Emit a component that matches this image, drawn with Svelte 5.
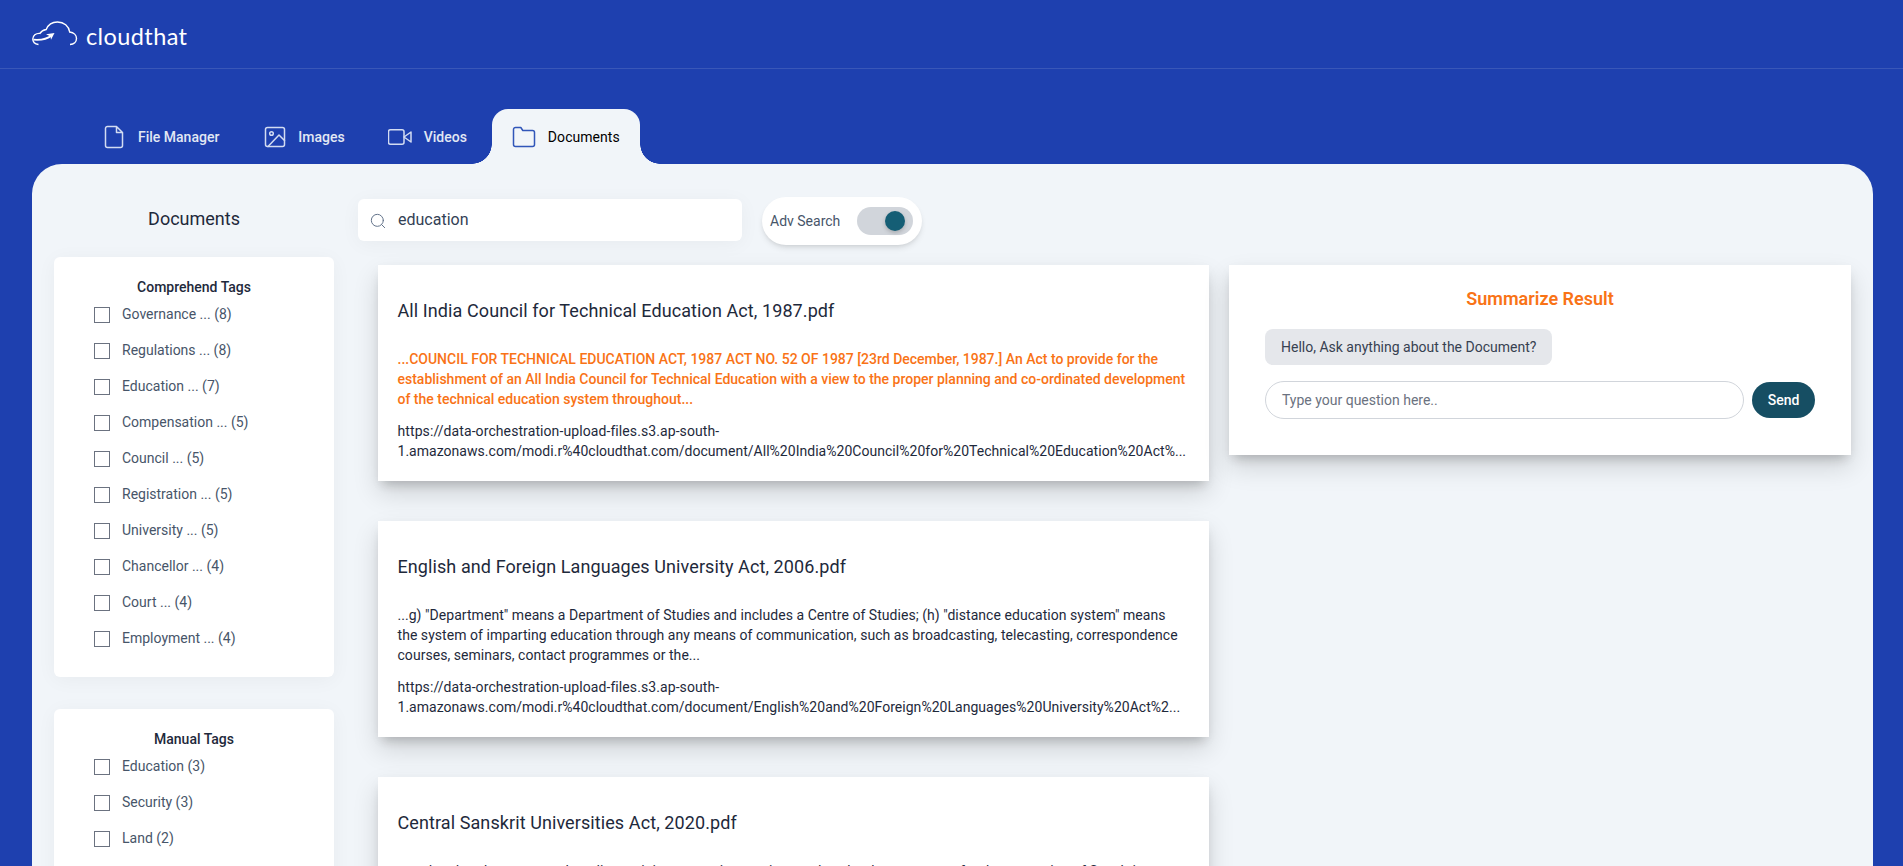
<script>
  const tabs = [
    { name: 'File Manager', icon: 'file' },
    { name: 'Images', icon: 'image' },
    { name: 'Videos', icon: 'video' },
    { name: 'Documents', icon: 'folder', active: true }
  ];
  const groups = [
    { title: 'Comprehend Tags', tags: ['Governance ... (8)', 'Regulations ... (8)', 'Education ... (7)', 'Compensation ... (5)', 'Council ... (5)', 'Registration ... (5)', 'University ... (5)', 'Chancellor ... (4)', 'Court ... (4)', 'Employment ... (4)'] },
    { title: 'Manual Tags', tags: ['Education (3)', 'Security (3)', 'Land (2)'] }
  ];
  const base = '1.amazonaws.com/modi.r%40cloudthat.com/document/';
  const results = [
    {
      title: 'All India Council for Technical Education Act, 1987.pdf', hot: true,
      lines: ['...COUNCIL FOR TECHNICAL EDUCATION ACT, 1987 ACT NO. 52 OF 1987 [23rd December, 1987.] An Act to provide for the', 'establishment of an All India Council for Technical Education with a view to the proper planning and co-ordinated development', 'of the technical education system throughout...'],
      url: 'All%20India%20Council%20for%20Technical%20Education%20Act%...'
    },
    {
      title: 'English and Foreign Languages University Act, 2006.pdf',
      lines: ['...g) "Department" means a Department of Studies and includes a Centre of Studies; (h) "distance education system" means', 'the system of imparting education through any means of communication, such as broadcasting, telecasting, correspondence', 'courses, seminars, contact programmes or the...'],
      url: 'English%20and%20Foreign%20Languages%20University%20Act%2...'
    },
    {
      title: 'Central Sanskrit Universities Act, 2020.pdf',
      lines: ['...and undertake extramural studies, training, extension services and such other measures for the promotion of Sanskrit']
    }
  ];
</script>

<div class="page">
  <header>
    <svg class="cloud" width="47" height="26" viewBox="0 0 47 26" fill="none" stroke="#fff" stroke-width="1.4">
      <path d="M6.500 23.500C2.500 23 .8 20.800.8 18c0-3.400 3-6 7.200-5.600 1.200-2.200 3.500-3.500 6.200-3.900C16 4 20.500 1 25.500 1c6.500 0 11.300 4.200 12.200 10 4.200.5 6.800 3.300 6.800 6.600 0 3.200-2.500 5.700-6.500 5.900" />
      <path d="M1.500 18.700c7.500.6 13.500-.5 18-4.200" stroke-width="1.800" />
      <path d="M14 13.200 22.500 12l-3.500 6.800-.5-3.300z" fill="#fff" stroke="none" />
    </svg>
    <span class="wordmark">cloudthat</span>
  </header>

  <nav>
    {#each tabs as tab}
      <div class="tab {tab.icon}" class:active={tab.active}>
        <svg width="24" height="24" viewBox="0 0 24 24" fill="none" stroke="currentColor" stroke-width="1.5" stroke-linecap="round" stroke-linejoin="round">
          {#if tab.icon === 'file'}
            <path d="M14.500 1.500H5.500a2 2 0 0 0-2 2v17a2 2 0 0 0 2 2h13a2 2 0 0 0 2-2V7.500zM14.500 1.500v6h6" />
          {:else if tab.icon === 'image'}
            <rect x="2.500" y="2.500" width="19" height="19" rx="2" /><circle cx="8.500" cy="8.500" r="1.800" /><path d="M21.500 15.500l-5.500-5.500L5 21.500" />
          {:else if tab.icon === 'video'}
            <path d="M23 7l-7 5 7 5V7z" /><rect x="0.500" y="4.700" width="15.500" height="14.600" rx="2" />
          {:else}
            <path d="M22.500 19.500a2 2 0 0 1-2 2h-17a2 2 0 0 1-2-2v-15a2 2 0 0 1 2-2h5.300l2 3h9.700a2 2 0 0 1 2 2z" />
          {/if}
        </svg>
        <span>{tab.name}</span>
        {#if tab.active}<i class="curve left"></i><i class="curve right"></i>{/if}
      </div>
    {/each}
  </nav>

  <main>
    <aside>
      <h2>Documents</h2>
      {#each groups as group}
        <section class="tags">
          <h3>{group.title}</h3>
          {#each group.tags as tag}
            <label><span class="box"></span>{tag}</label>
          {/each}
        </section>
      {/each}
    </aside>

    <div class="body">
      <div class="tools">
        <div class="search">
          <svg width="16" height="16" viewBox="0 0 24 24" fill="none" stroke="#64748b" stroke-width="1.500" stroke-linecap="round"><circle cx="11" cy="11" r="9" /><path d="M22 22l-4.600-4.600" /></svg>
          <span>education</span>
        </div>
        <div class="adv"><span>Adv Search</span><div class="toggle"><div class="knob"></div></div></div>
      </div>
      <div class="columns">
        <div class="results">
          {#each results as r}
            <article class="panel">
              <h4>{r.title}</h4>
              <div class="excerpt" class:hot={r.hot}>
                {#each r.lines as line}<div>{line}</div>{/each}
              </div>
              {#if r.url}
                <div class="url"><div>https://data-orchestration-upload-files.s3.ap-south-</div><div>{base}{r.url}</div></div>
              {/if}
            </article>
          {/each}
        </div>
        <section class="panel chat">
          <h3>Summarize Result</h3>
          <div class="bubble">Hello, Ask anything about the Document?</div>
          <div class="ask"><div class="input">Type your question here..</div><button>Send</button></div>
        </section>
      </div>
    </div>
  </main>
</div>

<style>
  :global(body) { margin: 0; overflow: hidden; }
  * { box-sizing: border-box; }
  h2, h3, h4 { margin: 0; }
  .page { height: 866px; overflow: hidden; background: #1e40af; font: 14px/20px Roboto, sans-serif; color: #1e293b; display: flex; flex-direction: column; padding: 0 30px 0 32px; }
  header { height: 69px; flex: none; display: flex; border-bottom: 1px solid rgba(255,255,255,.12); margin: 0 -30px 0 -32px; padding: 21px 0 0 32px; }
  .wordmark { font: 400 23.5px/30px Lato, sans-serif; color: #fff; margin-left: 7px; letter-spacing: .4px; }
  nav { display: flex; height: 95px; flex: none; padding: 40px 0 0 50px; }
  .tab { position: relative; display: flex; align-items: center; height: 55px; padding: 0 20px; color: #e2e8f4; font-weight: 500; }
  .tab svg { margin-right: 12px; flex: none; color: #d3dcf2; }
  .tab.file { margin-right: 4px; }
  .tab.image { margin-right: 3px; }
  .tab.image svg { margin-right: 11px; }
  .tab.video { margin-right: 5px; }
  .tab.active { background: #f1f5f9; border-radius: 16px 16px 0 0; color: #000; font-weight: 400; letter-spacing: .05px; }
  .tab.active svg { color: #3156b9; }
  .curve { position: absolute; bottom: 0; width: 20px; height: 20px; }
  .left { right: 100%; background: radial-gradient(circle at 0 0, transparent 19.500px, #f1f5f9 20px); }
  .right { left: 100%; background: radial-gradient(circle at 100% 0, transparent 19.500px, #f1f5f9 20px); }
  main { flex: none; height: 1100px; background: #f1f5f9; border-radius: 30px 30px 0 0; padding: 0 22px; display: flex; gap: 24px; }
  aside { width: 280px; flex: none; }
  h2 { font: 400 18px/28px Roboto, sans-serif; text-align: center; padding-top: 41px; height: 93px; }
  .tags { background: #fff; border-radius: 6px; height: 420px; margin-bottom: 32px; padding: 20px 40px; box-shadow: 0 3px 20px #0000000b; }
  .tags h3 { font: 500 14px/20px Roboto, sans-serif; text-align: center; }
  label { display: flex; align-items: center; gap: 12px; height: 20px; margin-bottom: 16px; color: #475569; }
  h3 + label { margin-top: 7px; }
  .box { width: 16px; height: 16px; border: 1px solid #6b7280; margin-top: 2px; }
  .body { flex: 1; }
  .tools { display: flex; align-items: center; padding-top: 33px; gap: 20px; height: 81px; }
  .search { width: 384px; height: 42px; margin-top: -2px; background: #fff; border-radius: 6px; display: flex; align-items: center; padding-left: 12px; gap: 12px; font-size: 16px; color: #334155; box-shadow: 0 3px 20px #0000000b; }
  .search svg { margin-top: 2px; }
  .adv { width: 160px; height: 48px; border-radius: 24px; background: #fff; padding: 0 9px 0 8px; display: flex; align-items: center; justify-content: space-between; color: #475569; box-shadow: 0 4px 6px -1px #0000001a, 0 2px 4px -2px #0000001a; }
  .toggle { width: 56px; height: 28px; border-radius: 14px; background: #d1d5db; padding: 4px 8px; display: flex; justify-content: flex-end; }
  .knob { width: 20px; height: 20px; border-radius: 50%; background: #155e75; box-shadow: 0 2px 4px #0003; }
  .columns { display: flex; align-items: flex-start; gap: 20px; padding: 20px 0 0 20px; }
  .results { width: 831px; display: flex; flex-direction: column; gap: 40px; }
  .panel { background: #fff; box-shadow: 0 8px 10px -5px #0000002b, 0 12px 24px #00000024, 0 4px 12px #00000008; }
  article { height: 216px; padding: 32px 20px 0 19.500px; white-space: nowrap; }
  h4 { font: 400 18px/28px Roboto, sans-serif; letter-spacing: .09px; }
  .excerpt { margin-top: 24px; height: 60px; letter-spacing: .045px; }
  .excerpt.hot { color: #f97316; font-weight: 500; letter-spacing: 0; }
  .url { margin-top: 12px; letter-spacing: .03px; }
  .url div:first-child { letter-spacing: .09px; }
  .chat { width: 622px; height: 190px; padding: 20px 36px; }
  .chat h3 { font: 600 18px/28px Roboto, sans-serif; color: #f97316; text-align: center; }
  .bubble { width: 287px; height: 36px; border-radius: 8px; background: #e5e7eb; padding: 8px 16px; margin-top: 16px; color: #374151; white-space: nowrap; }
  .ask { display: flex; align-items: center; gap: 8px; margin-top: 16px; }
  .input { flex: 1; height: 38px; border: 1px solid #d1d5db; border-radius: 19px; padding: 8px 16px; color: #6b7280; }
  button { width: 63px; height: 36px; border: 0; border-radius: 18px; background: #164e63; color: #fff; font: 500 14px/20px Roboto, sans-serif; padding: 0; }
</style>
